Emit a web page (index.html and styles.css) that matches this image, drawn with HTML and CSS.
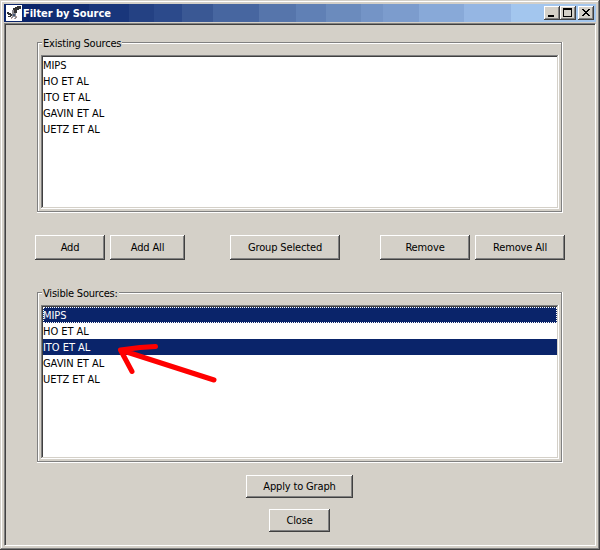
FILE: index.html
```html
<!DOCTYPE html>
<html lang="en">
<head>
<meta charset="utf-8">
<title>Filter by Source</title>
<link rel="stylesheet" href="styles.css">
</head>
<body>
<div class="window">
  <header class="titlebar">
    <svg class="app-icon" width="16" height="16" viewBox="0 0 16 16" shape-rendering="crispEdges">
      <rect width="16" height="16" fill="#fff"/>
      <path d="M9 2h2V1h4v3h-2v1h-2v3h-1v1H8V5H7V3h2z" fill="#333"/>
      <path d="M1 7h2v1h2v1h2v2H4v-1H2V9H1zM2 11h3v1H2z" fill="#333"/>
      <path d="M6 5h2v3h2v3h1v2h-1v1H9v-2H7v1H5v-1h1V8H6z" fill="#8e8d92"/>
      <path d="M7 9h2v2H7z" fill="#435773"/>
      <path d="M8 13h1v1H8zM10 11h1v1h-1zM5 13h1v1H5z" fill="#b99a90"/>
    </svg>
    <h1>Filter by Source</h1>
    <div class="controls">
      <button class="control" aria-label="Minimize"><svg width="16" height="14" shape-rendering="crispEdges"><path d="M4 9h6v2H4z"/></svg></button>
      <button class="control" aria-label="Maximize"><svg width="16" height="14" shape-rendering="crispEdges"><path fill-rule="evenodd" d="M3 2h9v9H3zM4 4v6h7V4z"/></svg></button>
      <button class="control close" aria-label="Close"><svg width="16" height="14" shape-rendering="crispEdges"><path d="M4 3h2v1h1v1h2V4h1V3h2v1h-1v1h-1v1H9v1h1v1h1v1h1v1h-2V9H9V8H7v1H6v1H4V9h1V8h1V7h1V6H6V5H5V4H4z"/></svg></button>
    </div>
  </header>
  <main class="content">
    <fieldset class="group">
      <legend>Existing Sources</legend>
      <ul class="list">
        <li>MIPS</li><li>HO ET AL</li><li>ITO ET AL</li><li>GAVIN ET AL</li><li>UETZ ET AL</li>
      </ul>
    </fieldset>
    <div class="toolbar">
      <button class="button add">Add</button>
      <button class="button add-all">Add All</button>
      <button class="button group-selected">Group Selected</button>
      <button class="button remove">Remove</button>
      <button class="button remove-all">Remove All</button>
    </div>
    <fieldset class="group">
      <legend class="visible">Visible Sources:</legend>
      <ul class="list">
        <li class="selected focused">MIPS</li><li>HO ET AL</li><li class="selected">ITO ET AL</li><li>GAVIN ET AL</li><li>UETZ ET AL</li>
      </ul>
      <svg class="arrow" width="110" height="50" viewBox="110 335 110 50"><path d="M155.500 346.500L140 347.500 120.500 350 214 380M120.500 350L132 371.500"/></svg>
    </fieldset>
    <footer class="actions">
      <button class="button apply">Apply to Graph</button>
      <button class="button dismiss">Close</button>
    </footer>
  </main>
</div>
</body>
</html>
```
FILE: styles.css
```css
* { box-sizing: border-box; }
body { margin: 0; font: 11px/16px "DejaVu Sans Condensed", "DejaVu Sans", sans-serif; font-stretch: condensed; color: #000; }
.window { width: 600px; height: 550px; padding: 4px; background: #d4d0c8; box-shadow: inset -1px -1px #404040, inset 1px 1px #d4d0c8, inset -2px -2px #808080, inset 2px 2px #fff; }
.titlebar { display: flex; align-items: center; height: 18px; padding: 0 2px; background: linear-gradient(90deg, #0a246a 36px, #112d72 36px 85px, #19367b 85px 125px, #244183 125px 150px, #2c4a8b 150px 178px, #3a5894 178px 209px, #4766a0 209px 255px, #5675ab 255px 292px, #6080b5 292px 322px, #6b8bbd 322px 357px, #7494c6 357px 379px, #7c9ccd 379px 415px, #88a9d8 415px 460px, #95b6e3 460px 507px, #a3c6ee 507px); }
.app-icon { flex: none; }
h1 { margin: 0 0 0 1px; padding-top: 1px; font-size: 11px; line-height: 18px; letter-spacing: -0.05px; color: #fff; white-space: nowrap; }
.controls { display: flex; margin-left: auto; }
.control { width: 16px; height: 14px; padding: 0; border: 0; background: #d4d0c8; box-shadow: inset -1px -1px #404040, inset 1px 1px #fff, inset -2px -2px #808080; }
.control svg { display: block; }
.close { margin-left: 2px; }
.content { height: 523px; margin-top: 1px; padding: 18px 31px 0 32px; border: 1px solid; border-color: #808080 #fff #fff #808080; box-shadow: inset 1px 1px #404040; }
.group { position: relative; width: 526px; height: 171px; min-width: 0; margin: 0; padding: 13px 4px 4px; border: 0; box-shadow: inset -1px -1px #fff; }
.group::before { content: ""; position: absolute; inset: 0 1px 1px 0; border: 1px solid #808080; box-shadow: inset 1px 1px #fff; }
.group legend { position: absolute; left: 5px; top: -7px; height: 16px; padding: 1px 1px 0; background: #d4d0c8; letter-spacing: -0.2px; white-space: nowrap; }
.list { position: relative; height: 154px; margin: 0; padding: 2px; list-style: none; background: #fff; box-shadow: inset -1px -1px #fff, inset 1px 1px #808080, inset -2px -2px #d4d0c8, inset 2px 2px #404040; }
.list li { height: 16px; line-height: 18px; letter-spacing: -0.05px; white-space: nowrap; }
.selected { color: #fff; background: #0a246a; }
.focused { outline: 1px dotted #fff; outline-offset: -1px; }
.arrow { position: absolute; left: 73px; top: 43px; fill: none; stroke: #f00; stroke-width: 5; stroke-linecap: round; stroke-linejoin: round; }
.toolbar { display: flex; margin: 22px 0 32px -2px; }
.button { flex: none; height: 25px; padding: 1px 0 0; border: 0; font: inherit; letter-spacing: -0.15px; white-space: nowrap; background: #d4d0c8; box-shadow: inset -1px -1px #404040, inset 1px 1px #fff, inset -2px -2px #808080; }
.add { width: 70px; }
.add-all { width: 75px; margin-left: 5px; }
.group-selected { width: 110px; margin-left: 45px; }
.remove { width: 90px; margin-left: 40px; }
.remove-all { width: 90px; margin-left: 5px; }
.actions { display: flex; flex-direction: column; align-items: flex-start; gap: 11px; margin-top: 12px; }
.actions .button { height: 23px; }
.apply { width: 107px; margin-left: 209px; }
.dismiss { width: 61px; margin-left: 232px; }
```
